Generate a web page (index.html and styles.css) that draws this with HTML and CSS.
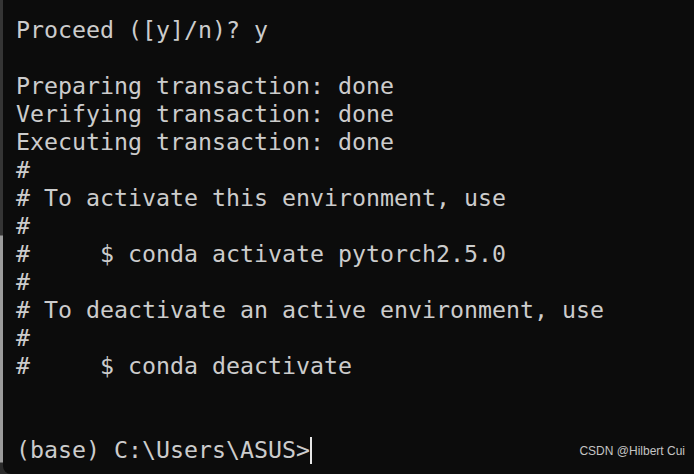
FILE: index.html
```html
<!DOCTYPE html>
<html>
<head>
<meta charset="utf-8">
<link rel="stylesheet" href="styles.css">
</head>
<body>
<div class="term">
<div class="out">
<div class="ln">Proceed ([y]/n)? y</div>
<div class="ln"> </div>
<div class="ln">Preparing transaction: done</div>
<div class="ln">Verifying transaction: done</div>
<div class="ln">Executing transaction: done</div>
<div class="ln">#</div>
<div class="ln"># To activate this environment, use</div>
<div class="ln">#</div>
<div class="ln">#     $ conda activate pytorch2.5.0</div>
<div class="ln">#</div>
<div class="ln"># To deactivate an active environment, use</div>
<div class="ln">#</div>
<div class="ln">#     $ conda deactivate</div>
<div class="ln"> </div>
<div class="ln"> </div>
<div class="ln">(base) C:\Users\ASUS&gt;<span class="cursor"></span></div>
</div>
<div class="mark">CSDN @Hilbert Cui</div>
</div>
</body>
</html>
```
FILE: styles.css
```css
html, body {
  margin: 0;
  padding: 0;
  width: 694px;
  height: 474px;
  overflow: hidden;
}
body {
  background: linear-gradient(to bottom, #353535 0, #353535 235px, #9c9c9c 236px, #9c9c9c 462px, #2a2a2a 463px);
}
.term {
  position: relative;
  margin-left: 3px;
  height: 474px;
  background: #0c0c0c;
  border-bottom-left-radius: 8px;
  box-sizing: border-box;
  padding: 16px 0 0 13px;
}
.out {
  font-family: "DejaVu Sans Mono", monospace;
  font-size: 23.25px;
  line-height: 28px;
  color: #cccccc;
}
.ln {
  white-space: pre;
  width: fit-content;
  height: 28px;
}
.cursor {
  display: inline-block;
  width: 2px;
  height: 27px;
  background: #e6e6e6;
  vertical-align: -6px;
}
.mark {
  position: absolute;
  right: 9px;
  bottom: 16px;
  font-family: "Liberation Sans", sans-serif;
  font-size: 12px;
  line-height: 14px;
  color: #c4c4c4;
}
```
